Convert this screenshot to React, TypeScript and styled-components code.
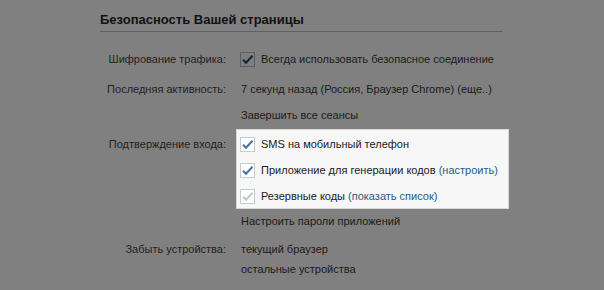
import React from "react";
import styled, { createGlobalStyle } from "styled-components";

const Global = createGlobalStyle`
  html, body { margin: 0; padding: 0; background: #808080; }
  body { font-family: "Liberation Sans", Arial, sans-serif; font-size: 11px; color: #1a1a1a; }
`;

const Page = styled.div`
  width: 604px;
  height: 290px;
  padding: 12px 0 0 100px;
  box-sizing: border-box;
  overflow: hidden;
`;

const Title = styled.div`
  width: 403px;
  font-weight: bold;
  font-size: 13px;
  color: #111;
  padding: 0 0 4px 0;
  border-bottom: 1px solid #5c6068;
`;

const Rows = styled.div`
  display: flex;
  flex-direction: column;
  padding-top: 17px;
`;

const Row = styled.div<{ $mt?: number }>`
  display: grid;
  grid-template-columns: 126px 1fr;
  column-gap: 15px;
  margin-top: ${(p) => p.$mt ?? 0}px;
`;

const Label = styled.div<{ $pt?: number }>`
  text-align: right;
  color: #222;
  line-height: 20px;
  white-space: nowrap;
  padding-top: ${(p) => p.$pt ?? 0}px;
`;

const Values = styled.div`
  display: flex;
  flex-direction: column;
`;

const Line = styled.div<{ $mt?: number }>`
  line-height: 20px;
  margin-top: ${(p) => p.$mt ?? 0}px;
  white-space: nowrap;
`;

const CheckRow = styled.div`
  display: flex;
  align-items: center;
  gap: 6px;
  height: 20px;
  margin-left: -1px;
  white-space: nowrap;
`;

const Box = styled.div`
  margin-left: -5px;
  width: 273px;
  height: 80px;
  box-sizing: border-box;
  background: #f7f7f7;
  border: 1px solid #d8d8d8;
  padding: 4px 0 0 4px;
  display: flex;
  flex-direction: column;
  gap: 6px;
`;

const Check = styled.span<{ $dim?: boolean }>`
  width: 15px;
  height: 15px;
  box-sizing: border-box;
  flex: none;
  border: 1px solid ${(p) => (p.$dim ? "#5a5d62" : "#c5cbd2")};
  background: ${(p) => (p.$dim ? "#7c7e80" : "#ffffff")};
  display: flex;
  align-items: center;
  justify-content: center;
`;

const Link = styled.span`
  color: #2b5a83;
`;

const Mark = ({ color }: { color: string }) => (
  <svg width="13" height="11" viewBox="0 0 13 11">
    <path d="M2 5.8 L5 8.8 L11.5 1.8" fill="none" stroke={color} strokeWidth="2" />
  </svg>
);

export default function App() {
  return (
    <>
      <Global />
      <Page>
        <Title>Безопасность Вашей страницы</Title>
        <Rows>
          <Row>
            <Label>Шифрование трафика:</Label>
            <Values>
              <CheckRow>
                <Check $dim>
                  <Mark color="#14223a" />
                </Check>
                <span>Всегда использовать безопасное соединение</span>
              </CheckRow>
            </Values>
          </Row>
          <Row $mt={10}>
            <Label>Последняя активность:</Label>
            <Values>
              <Line>7 секунд назад (Россия, Браузер Chrome) (еще..)</Line>
              <Line $mt={6}>Завершить все сеансы</Line>
            </Values>
          </Row>
          <Row $mt={4}>
            <Label $pt={5}>Подтверждение входа:</Label>
            <Values>
              <Box>
                <CheckRow>
                  <Check>
                    <Mark color="#4a72a0" />
                  </Check>
                  <span>SMS на мобильный телефон</span>
                </CheckRow>
                <CheckRow>
                  <Check>
                    <Mark color="#4a72a0" />
                  </Check>
                  <span>
                    Приложение для генерации кодов <Link>(настроить)</Link>
                  </span>
                </CheckRow>
                <CheckRow>
                  <Check>
                    <Mark color="#c4c8cc" />
                  </Check>
                  <span>
                    Резервные коды <Link>(показать список)</Link>
                  </span>
                </CheckRow>
              </Box>
              <Line $mt={2}>Настроить пароли приложений</Line>
            </Values>
          </Row>
          <Row $mt={8}>
            <Label>Забыть устройства:</Label>
            <Values>
              <Line>текущий браузер</Line>
              <Line>остальные устройства</Line>
            </Values>
          </Row>
        </Rows>
      </Page>
    </>
  );
}
